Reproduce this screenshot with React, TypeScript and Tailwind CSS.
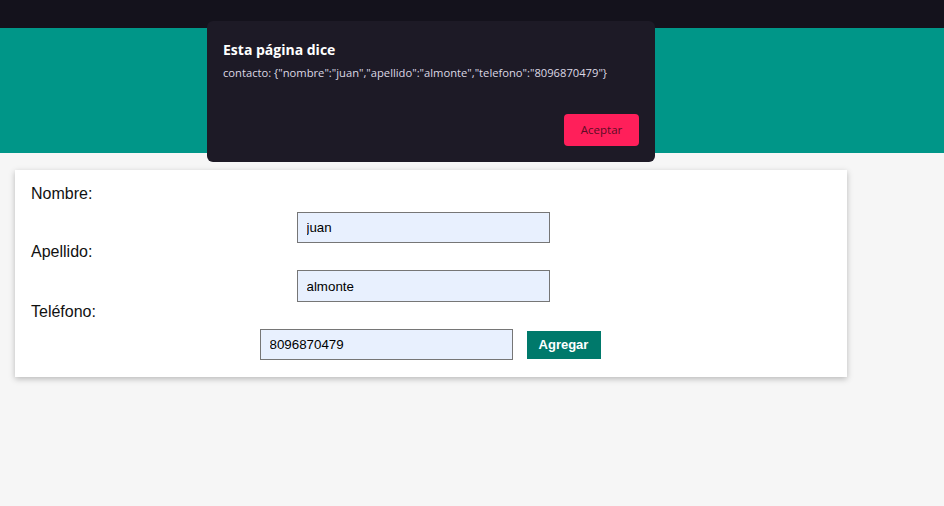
import React from "react";

export default function App() {
  const inputCls =
    "h-[31px] w-[253px] border border-[#767676] bg-[#e8f0fe] px-[9px] text-[13.33px] text-black outline-none";
  return (
    <div
      className="relative min-h-[506px] w-full bg-[#f6f6f6]"
      style={{ fontFamily: "'Liberation Sans', Arial, sans-serif" }}
    >
      <div className="h-[28px] bg-[#14121c]" />
      <div className="h-[125px] bg-[#009688]" />
      <div className="px-[15px] pt-[17px]">
        <div className="w-[832px] bg-white px-4 pt-[15px] pb-[17px] shadow-[0_2px_6px_rgba(0,0,0,0.25)]">
          <div className="text-[16px] leading-[18px] text-[#111]">Nombre:</div>
          <div className="mt-[9px] flex justify-center pr-[16px]">
            <input className={inputCls} defaultValue="juan" />
          </div>
          <div className="text-[16px] leading-[18px] text-[#111]">Apellido:</div>
          <div className="mt-[9px] flex justify-center pr-[16px]">
            <input className={inputCls + " h-[32px]"} defaultValue="almonte" />
          </div>
          <div className="mt-[1px] text-[16px] leading-[18px] text-[#111]">Teléfono:</div>
          <div className="mt-[8px] flex items-center justify-center gap-[14px] pr-[2px]">
            <input className={inputCls} defaultValue="8096870479" />
            <button className="h-[28px] w-[74px] bg-[#00796b] text-[13px] font-bold text-white">
              Agregar
            </button>
          </div>
        </div>
      </div>

      <div
        className="absolute left-[207px] top-[21px] h-[141px] w-[448px] rounded-[6px] bg-[#1d1a26] px-[16px] pt-[19px]"
        style={{ fontFamily: "'Open Sans', 'Noto Sans', sans-serif" }}
      >
        <div className="text-[14px] font-bold leading-[20px] text-white">Esta página dice</div>
        <div className="mt-[5px] text-[11.2px] leading-[16px] text-[#dcd8e4]">
          contacto: {'{"nombre":"juan","apellido":"almonte","telefono":"8096870479"}'}
        </div>
        <div className="absolute bottom-[16px] right-[16px]">
          <button className="h-[32px] w-[75px] rounded-[4px] bg-[#ff1f5a] text-[11.5px] text-[#5c0c25]">
            Aceptar
          </button>
        </div>
      </div>
    </div>
  );
}
